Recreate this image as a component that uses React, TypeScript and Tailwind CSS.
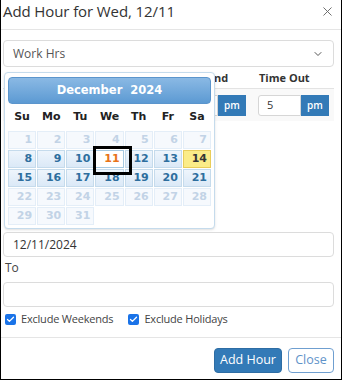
import { Check, ChevronDown, X } from 'lucide-react';

const weeks: number[][] = [
  [1, 2, 3, 4, 5, 6, 7],
  [8, 9, 10, 11, 12, 13, 14],
  [15, 16, 17, 18, 19, 20, 21],
  [22, 23, 24, 25, 26, 27, 28],
  [29, 30, 31],
];

function dayClass(d: number) {
  if (d === 14) return 'bg-[#fbec88] border-[#e8cd5a] text-[#363636]';
  if (d === 11) return 'bg-white border-[#a6c9e2] text-[#e8731a]';
  if (d >= 8 && d <= 21) return 'bg-gradient-to-b from-[#eef5fc] to-[#dbe9f7] border-[#c5dbec] text-[#2e6e9e]';
  return 'bg-[#f6f9fd] border-[#e4eef8] text-[#c2d3e6]';
}

function Calendar() {
  return (
    <div className="absolute left-[3px] top-[72px] w-[211px] rounded-[4px] border border-[#c5dbec] bg-white px-[3px] pb-[3px] pt-[4px] font-['DejaVu_Sans',sans-serif] shadow-sm">
      <div className="flex h-[27px] items-center justify-center rounded-[4px] border border-[#5b95cc] bg-gradient-to-b from-[#8ab9e4] to-[#5c9ad3] text-[11.5px] font-bold text-white">
        December&nbsp;&nbsp;2024
      </div>
      <div className="grid grid-cols-7 gap-x-[1px]">
        {['Su', 'Mo', 'Tu', 'We', 'Th', 'Fr', 'Sa'].map((n) => (
          <div key={n} className="flex h-[27px] items-center justify-center text-[11px] font-bold text-[#222]">
            {n}
          </div>
        ))}
      </div>
      <div className="flex flex-col gap-[1px]">
        {weeks.map((w, i) => (
          <div key={i} className="grid grid-cols-7 gap-x-[1px]">
            {w.map((d) => (
              <div
                key={d}
                className={`relative flex h-[18px] items-center justify-end border pr-[3px] text-[11px] font-bold ${dayClass(d)} ${d === 11 ? 'z-10' : ''}`}
              >
                {d}
                {d === 11 && (
                  <div className="pointer-events-none absolute left-[-3px] top-[-5px] h-[29px] w-[39px] border-[3px] border-black" />
                )}
              </div>
            ))}
          </div>
        ))}
      </div>
    </div>
  );
}

function PmGroup({ value, inputW }: { value: string; inputW: string }) {
  return (
    <div className="flex h-[21px]">
      <div className={`flex items-center rounded-l-[3px] border border-[#d6d6d6] bg-white pl-[8px] text-[11px] text-[#333] ${inputW}`}>
        {value}
      </div>
      <div className="flex w-[28px] items-center justify-center bg-[#337ab7] text-[10px] font-semibold text-white">pm</div>
    </div>
  );
}

function Box() {
  return (
    <span className="flex h-[11px] w-[11px] items-center justify-center rounded-[2px] bg-[#1a73e8]">
      <Check size={9} strokeWidth={3.5} className="text-white" />
    </span>
  );
}

export default function App() {
  return (
    <div className="relative h-[380px] w-[342px] overflow-hidden border-x border-b border-black bg-white font-['Open_Sans',sans-serif] text-[#333]">
      {/* header */}
      <div className="flex h-[30px] items-start justify-between border-b border-[#e5e5e5] pl-[2px] pr-[6px] pt-[3px]">
        <h2 className="text-[15px] font-medium leading-[16px] tracking-[-0.1px] text-[#333]">Add Hour for Wed, 12/11</h2>
        <X size={15} strokeWidth={1.5} className="mt-[1px] text-[#666]" />
      </div>

      {/* body */}
      <div className="pl-[2px] pr-[7px] pt-[10px]">
        <div className="flex h-[27px] items-center justify-between rounded-[4px] border border-[#dcdcdc] px-[9px] text-[12px] text-[#555]">
          <span>Work Hrs</span>
          <ChevronDown size={12} strokeWidth={2} className="text-[#555]" />
        </div>

        <div className="mt-[3px]">
          <div className="flex h-[17px] items-center gap-[12px] pr-[5px] text-[11px] font-bold text-[#333]">
            <div className="flex-1 pl-[4px]">Time In</div>
            <div className="ml-[-3px] w-[68px]">Time End</div>
            <div className="w-[71px] pl-[1px]">Time Out</div>
          </div>
          <div className="mt-[1px] flex h-[33px] items-center gap-[12px] border-t border-[#e3e3e3] bg-[#f9f9f9] pr-[5px]">
            <div className="flex-1 pl-[4px]">
              <PmGroup value="9" inputW="w-[60px]" />
            </div>
            <div className="w-[65px]">
              <PmGroup value="12" inputW="w-[37px]" />
            </div>
            <div className="w-[71px]">
              <PmGroup value="5" inputW="w-[43px]" />
            </div>
          </div>
        </div>

        {/* space covered by the date picker */}
        <div className="h-[111px]" />

        <div className="flex h-[25px] items-center rounded-[4px] border border-[#dcdcdc] px-[9px] text-[12px] text-[#333]">
          12/11/2024
        </div>

        <div className="mt-[1px] pl-[2px] text-[12px] leading-[20px] text-[#444]">To</div>
        <div className="mt-[4px] h-[25px] rounded-[4px] border border-[#dcdcdc]" />

        <div className="mt-[4px] flex h-[16px] items-center pl-[2px] text-[11px] tracking-[-0.2px] text-[#444]">
          <Box />
          <span className="ml-[5px]">Exclude Weekends</span>
          <span className="ml-[15px]">
            <Box />
          </span>
          <span className="ml-[5px]">Exclude Holidays</span>
        </div>
      </div>

      {/* footer */}
      <div className="mt-[10px] flex justify-end gap-[6px] border-t border-[#e5e5e5] pr-[7px] pt-[10px]">
        <button className="h-[25px] w-[68px] rounded-[4px] border border-[#2e6da4] bg-[#337ab7] text-[12.5px] text-white">
          Add Hour
        </button>
        <button className="h-[25px] w-[46px] rounded-[4px] border border-[#6f9fd0] bg-white text-[12.5px] text-[#5f93c9]">
          Close
        </button>
      </div>

      <Calendar />
    </div>
  );
}
